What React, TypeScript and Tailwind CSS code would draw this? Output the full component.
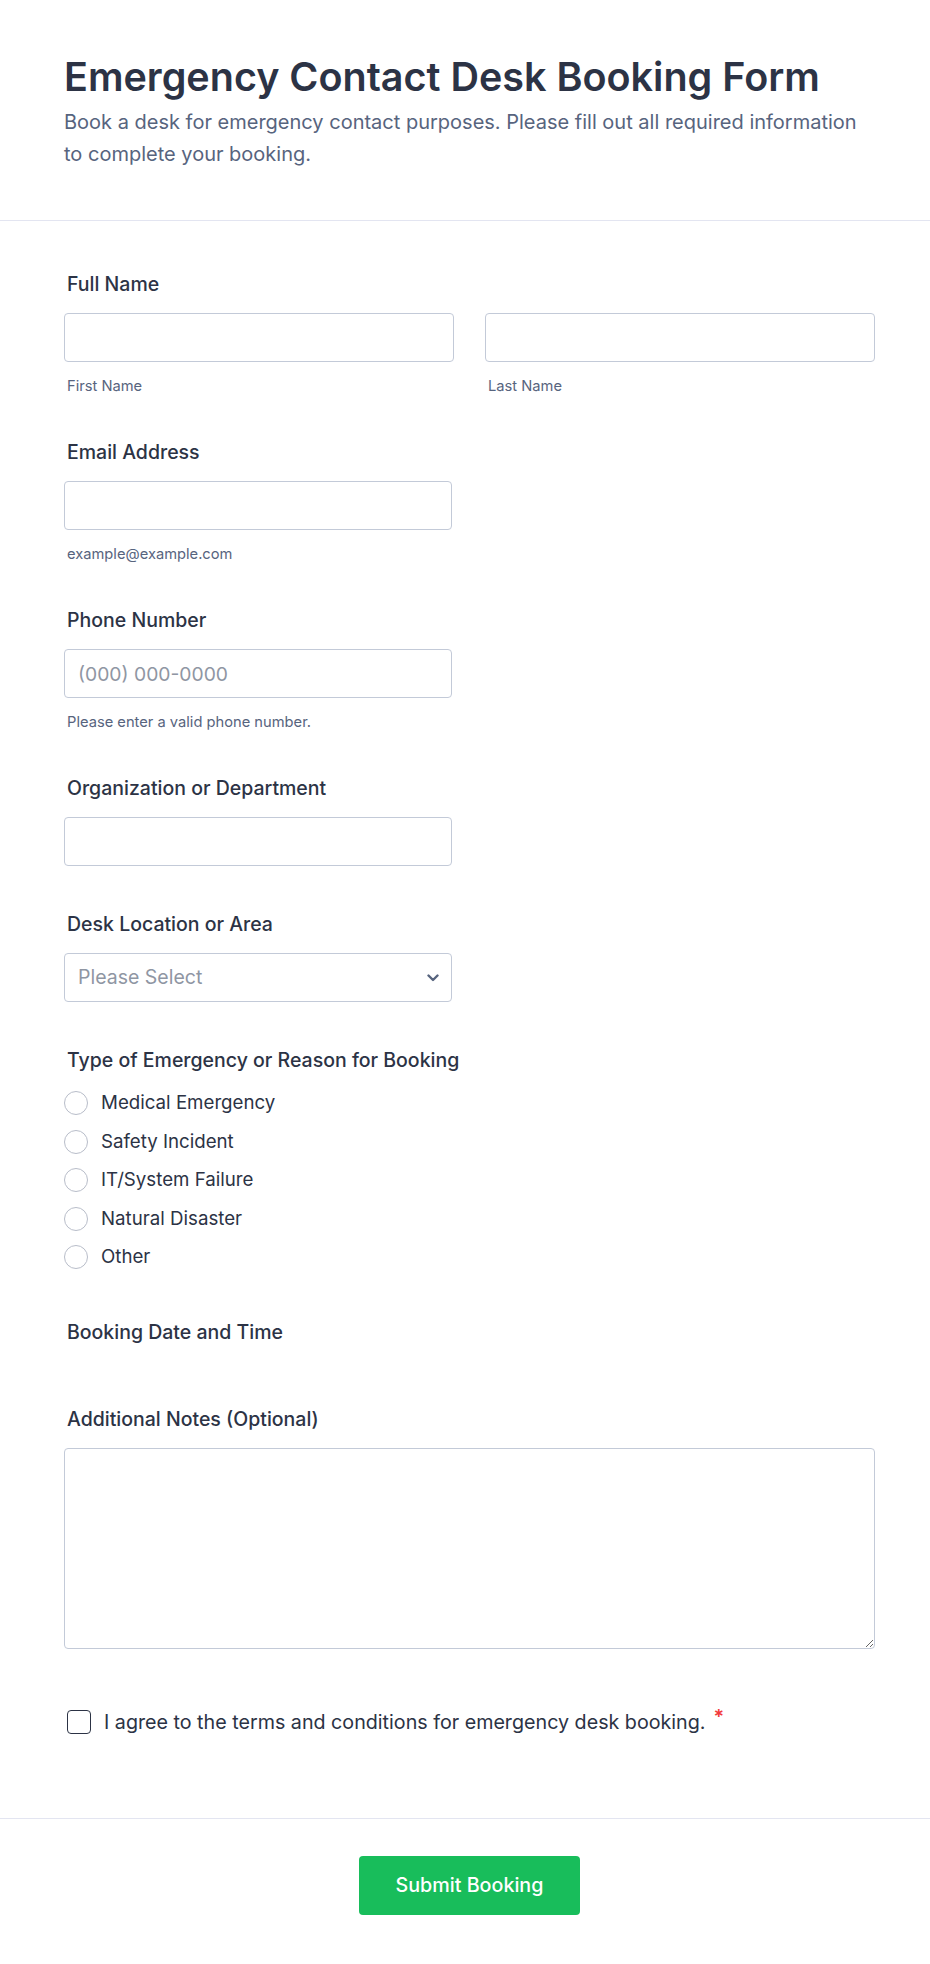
import React from "react";

const labelCls =
  "block pl-[3px] text-[19.5px] leading-[24px] font-medium text-[#2c3345]";
const inputCls =
  "block h-[49px] w-full rounded-[4px] border border-[#c3cad8] bg-white px-[13px] text-[19.3px] text-[#2c3345] placeholder:text-[#8f96a3] outline-none";
const subCls = "mt-[15px] pl-[3px] text-[14.7px] leading-[18px] text-[#57647e]";

function Radio({ label }: { label: string }) {
  return (
    <label className="flex h-[24px] items-center gap-[13px]">
      <span className="h-[24px] w-[24px] shrink-0 rounded-full border border-[#b8bdc9] bg-white" />
      <span className="text-[18.7px] leading-[24px] text-[#2c3345]">{label}</span>
    </label>
  );
}

export default function App() {
  return (
    <div className="min-h-screen w-full bg-white font-['Inter','Noto_Sans',sans-serif] text-[#2c3345]">
      {/* Header */}
      <div className="border-b border-[#e3e5f1] pl-[64px] pr-[64px] pt-[55px] pb-[50px]">
        <h1 className="text-[39.5px] leading-[45px] font-semibold text-[#2c3345]">
          Emergency Contact Desk Booking Form
        </h1>
        <p className="mt-[6px] text-[20px] leading-[32px] text-[#57647e]">
          Book a desk for emergency contact purposes. Please fill out all required information to
          complete your booking.
        </p>
      </div>

      {/* Form body */}
      <div className="pl-[64px] pr-[55px] pt-[51px]">
        {/* Full Name */}
        <div className="pb-[45px]">
          <div className={labelCls}>Full Name</div>
          <div className="mt-[17px] grid grid-cols-2 gap-[31px]">
            <div>
              <input className={inputCls} />
              <div className={subCls}>First Name</div>
            </div>
            <div>
              <input className={inputCls} />
              <div className={subCls}>Last Name</div>
            </div>
          </div>
        </div>

        {/* Email */}
        <div className="pb-[45px]">
          <div className={labelCls}>Email Address</div>
          <div className="mt-[17px] w-[388px]">
            <input className={inputCls} />
            <div className={subCls}>example@example.com</div>
          </div>
        </div>

        {/* Phone */}
        <div className="pb-[45px]">
          <div className={labelCls}>Phone Number</div>
          <div className="mt-[17px] w-[388px]">
            <input className={inputCls} placeholder="(000) 000-0000" />
            <div className={subCls}>Please enter a valid phone number.</div>
          </div>
        </div>

        {/* Organization */}
        <div className="pb-[46px]">
          <div className={labelCls}>Organization or Department</div>
          <div className="mt-[17px] w-[388px]">
            <input className={inputCls} />
          </div>
        </div>

        {/* Desk Location */}
        <div className="pb-[46px]">
          <div className={labelCls}>Desk Location or Area</div>
          <div className="relative mt-[17px] w-[388px]">
            <div className="flex h-[49px] w-full items-center rounded-[4px] border border-[#c3cad8] bg-white pl-[13px] pr-[12px]">
              <span className="flex-1 text-[19.5px] text-[#8f96a3]">Please Select</span>
              <svg width="12" height="8" viewBox="0 0 12 8" fill="none">
                <path
                  d="M1.5 1.5L6 6L10.5 1.5"
                  stroke="#57647e"
                  strokeWidth="2.4"
                  strokeLinecap="round"
                  strokeLinejoin="round"
                />
              </svg>
            </div>
          </div>
        </div>

        {/* Type of Emergency */}
        <div className="pb-[51px]">
          <div className={labelCls}>Type of Emergency or Reason for Booking</div>
          <div className="mt-[19px] flex flex-col gap-[14.6px]">
            <Radio label="Medical Emergency" />
            <Radio label="Safety Incident" />
            <Radio label="IT/System Failure" />
            <Radio label="Natural Disaster" />
            <Radio label="Other" />
          </div>
        </div>

        {/* Booking Date */}
        <div className="pb-[63px]">
          <div className={labelCls}>Booking Date and Time</div>
        </div>

        {/* Notes */}
        <div className="pb-[61px]">
          <div className={labelCls}>Additional Notes (Optional)</div>
          <textarea className="mt-[17px] block h-[201px] w-full rounded-[4px] border border-[#c3cad8] bg-white p-[12px] text-[18.7px] outline-none" />
        </div>

        {/* Agreement */}
        <div className="flex items-start gap-[13px] pl-[3px] pb-[84px]">
          <span className="h-[24px] w-[24px] shrink-0 rounded-[4px] border-[1.5px] border-[#2c3345] bg-white" />
          <span className="text-[19.7px] leading-[24px] text-[#2c3345]">
            I agree to the terms and conditions for emergency desk booking.
            <span className="relative -top-[5px] ml-[8px] font-semibold text-[#f23a3c]">*</span>
          </span>
        </div>
      </div>

      {/* Footer */}
      <div className="flex justify-center border-t border-[#e3e5f1] pl-[64px] pr-[55px] pt-[37px] pb-[50px]">
        <button className="h-[59px] w-[221px] rounded-[4px] bg-[#18bd5b] text-[19.7px] font-medium text-white">
          Submit Booking
        </button>
      </div>
    </div>
  );
}
